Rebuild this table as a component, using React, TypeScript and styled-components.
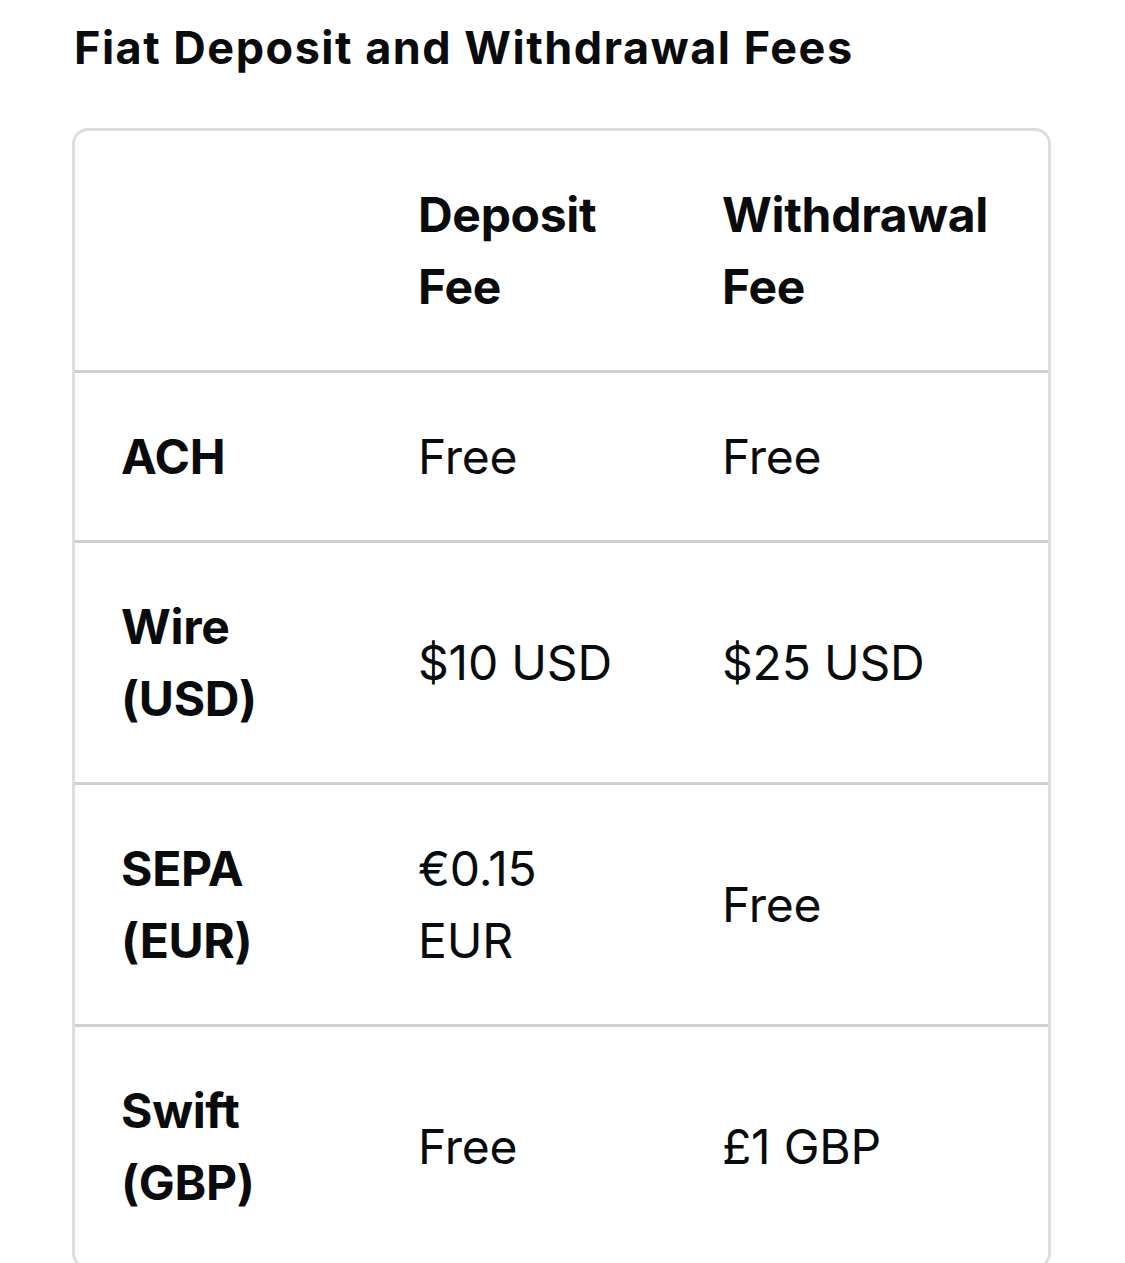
import React from "react";
import styled, { createGlobalStyle } from "styled-components";

const Global = createGlobalStyle`
  html, body { margin: 0; padding: 0; background: #ffffff; }
  body { font-family: Inter, "Noto Sans", "Liberation Sans", sans-serif; color: #0a0b0d; }
`;

const Page = styled.div`
  padding: 12px 74px 0 72px;
`;

const Title = styled.h2`
  margin: 0 0 0 2px;
  font-size: 45px;
  line-height: 72px;
  font-weight: 700;
  letter-spacing: 1.5px;
  color: #0a0b0d;
`;

const Card = styled.div`
  margin-top: 44px;
  border: 3px solid #dcdde0;
  border-radius: 16px;
  overflow: hidden;
`;

const Row = styled.div<{ $last?: boolean }>`
  display: grid;
  grid-template-columns: 297px 304px 1fr;
  align-items: center;
  border-bottom: ${(p) => (p.$last ? "none" : "3px solid #cfd0d4")};
`;

const Cell = styled.div<{ $bold?: boolean }>`
  padding: 48px 24px 47px 46px;
  font-size: 48px;
  line-height: 72px;
  font-weight: ${(p) => (p.$bold ? 700 : 400)};
  letter-spacing: ${(p) => (p.$bold ? "-0.3px" : "-0.2px")};
  color: #0a0b0d;
  white-space: nowrap;
`;

const Line = styled.span`
  display: block;
`;

type FeeRow = { label: string[]; dep: string[]; wd: string[] };

const rows: FeeRow[] = [
  { label: ["ACH"], dep: ["Free"], wd: ["Free"] },
  { label: ["Wire", "(USD)"], dep: ["$10 USD"], wd: ["$25 USD"] },
  { label: ["SEPA", "(EUR)"], dep: ["€0.15", "EUR"], wd: ["Free"] },
  { label: ["Swift", "(GBP)"], dep: ["Free"], wd: ["£1 GBP"] },
];

const Lines = ({ items }: { items: string[] }) => (
  <>
    {items.map((t) => (
      <Line key={t}>{t}</Line>
    ))}
  </>
);

export default function App() {
  return (
    <>
      <Global />
      <Page>
        <Title>Fiat Deposit and Withdrawal Fees</Title>
        <Card>
          <Row>
            <Cell $bold />
            <Cell $bold>
              <Lines items={["Deposit", "Fee"]} />
            </Cell>
            <Cell $bold>
              <Lines items={["Withdrawal", "Fee"]} />
            </Cell>
          </Row>
          {rows.map((r, i) => (
            <Row key={r.label[0]} $last={i === rows.length - 1}>
              <Cell $bold>
                <Lines items={r.label} />
              </Cell>
              <Cell>
                <Lines items={r.dep} />
              </Cell>
              <Cell>
                <Lines items={r.wd} />
              </Cell>
            </Row>
          ))}
        </Card>
      </Page>
    </>
  );
}
